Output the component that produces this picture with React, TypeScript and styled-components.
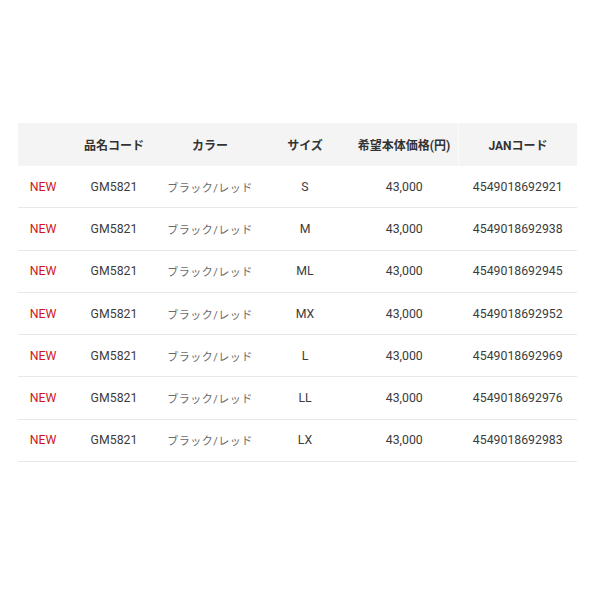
import styled, { createGlobalStyle } from "styled-components";

const GlobalStyle = createGlobalStyle`
  html, body {
    margin: 0;
    padding: 0;
    background: #ffffff;
  }
  body {
    font-family: Roboto, "Noto Sans CJK JP", sans-serif;
  }
`;

const Page = styled.div`
  width: 600px;
  height: 600px;
  box-sizing: border-box;
  padding: 123px 24px 0 18px;
`;

const Table = styled.table`
  width: 558px;
  border-collapse: collapse;
  table-layout: fixed;
`;

const HeadRow = styled.tr`
  background: #f4f4f4;
`;

const HeadCell = styled.th<{ $w: number; $divider?: boolean }>`
  width: ${(p) => p.$w}px;
  height: 43px;
  padding: 0;
  font-size: 12px;
  font-weight: 700;
  color: #333333;
  text-align: center;
  border-left: ${(p) => (p.$divider ? "1px solid #fbfbfb" : "none")};
`;

const Row = styled.tr`
  border-bottom: 1px solid #e8e8e8;
`;

const Cell = styled.td<{ $tone?: "new" | "light" }>`
  height: 41.3px;
  padding: 0;
  text-align: center;
  font-weight: 400;
  color: ${(p) =>
    p.$tone === "new" ? "#cf161e" : p.$tone === "light" ? "#6a6a6a" : "#3c3c3c"};
  letter-spacing: ${(p) => (p.$tone === "light" ? "0.5px" : "0")};
  font-size: ${(p) => (p.$tone === "light" ? "11px" : "12.3px")};
`;

const columns = [
  { label: "", w: 50 },
  { label: "品名コード", w: 92 },
  { label: "カラー", w: 100 },
  { label: "サイズ", w: 90 },
  { label: "希望本体価格(円)", w: 108 },
  { label: "JANコード", w: 118, divider: true },
];

const items = [
  { size: "S", jan: "4549018692921" },
  { size: "M", jan: "4549018692938" },
  { size: "ML", jan: "4549018692945" },
  { size: "MX", jan: "4549018692952" },
  { size: "L", jan: "4549018692969" },
  { size: "LL", jan: "4549018692976" },
  { size: "LX", jan: "4549018692983" },
];

export default function App() {
  return (
    <>
      <GlobalStyle />
      <Page>
        <Table>
          <thead>
            <HeadRow>
              {columns.map((c, i) => (
                <HeadCell key={i} $w={c.w} $divider={c.divider}>
                  {c.label}
                </HeadCell>
              ))}
            </HeadRow>
          </thead>
          <tbody>
            {items.map((it) => (
              <Row key={it.jan}>
                <Cell $tone="new">NEW</Cell>
                <Cell>GM5821</Cell>
                <Cell $tone="light">ブラック/レッド</Cell>
                <Cell>{it.size}</Cell>
                <Cell>43,000</Cell>
                <Cell>{it.jan}</Cell>
              </Row>
            ))}
          </tbody>
        </Table>
      </Page>
    </>
  );
}
